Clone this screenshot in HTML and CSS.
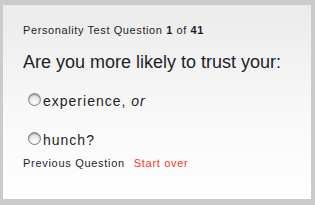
FILE: index.html
```html
<!DOCTYPE html>
<html>
<head>
<meta charset="utf-8">
<link rel="stylesheet" href="styles.css">
</head>
<body>
<div class="card">
  <div class="progress">Personality Test Question <b>1</b> of <b>41</b></div>
  <h1 class="question">Are you more likely to trust your:</h1>
  <div class="options">
    <label class="option"><span class="radio"></span><span>experience, <i>or</i></span></label>
    <label class="option"><span class="radio"></span><span>hunch?</span></label>
  </div>
  <div class="nav"><span class="prev">Previous Question</span><span class="restart">Start over</span></div>
</div>
</body>
</html>
```
FILE: styles.css
```css
html, body { margin: 0; padding: 0; }
body {
  background: #cbcbcb;
  width: 315px;
  height: 205px;
  padding: 5px 4px 6px 3px;
  box-sizing: border-box;
  font-family: "Liberation Sans", Arial, sans-serif;
  color: #1e1e28;
}
.card {
  height: 194px;
  box-sizing: border-box;
  background: linear-gradient(#ebebeb, #f8f8f8 55%, #ffffff);
  padding: 18px 0 0 20px;
}
.progress {
  font-size: 11px;
  letter-spacing: 0.6px;
  line-height: 14px;
}
.progress b { font-weight: bold; }
.question {
  margin: 14px 0 0;
  font-size: 18px;
  font-weight: normal;
  line-height: 22px;
}
.options {
  display: flex;
  flex-direction: column;
  gap: 21px;
  margin-top: 19px;
  padding-left: 5px;
}
.option {
  display: flex;
  align-items: center;
  gap: 2px;
  font-size: 14px;
  letter-spacing: 1px;
  line-height: 18px;
}
.option i { font-style: italic; }
.radio {
  flex: none;
  width: 11px;
  height: 11px;
  border-radius: 50%;
  border: 1px solid #808080;
  background: radial-gradient(circle at 50% 75%, #ffffff, #e6e6e6 55%, #bdbdbd);
  box-shadow: inset 0 1px 1px rgba(0,0,0,0.3);
  margin-top: -3px;
}
.nav {
  font-size: 11px;
  letter-spacing: 0.7px;
  line-height: 14px;
  display: flex;
  gap: 9px;
  margin-top: 7px;
}
.restart { color: #ff3322; }
```
